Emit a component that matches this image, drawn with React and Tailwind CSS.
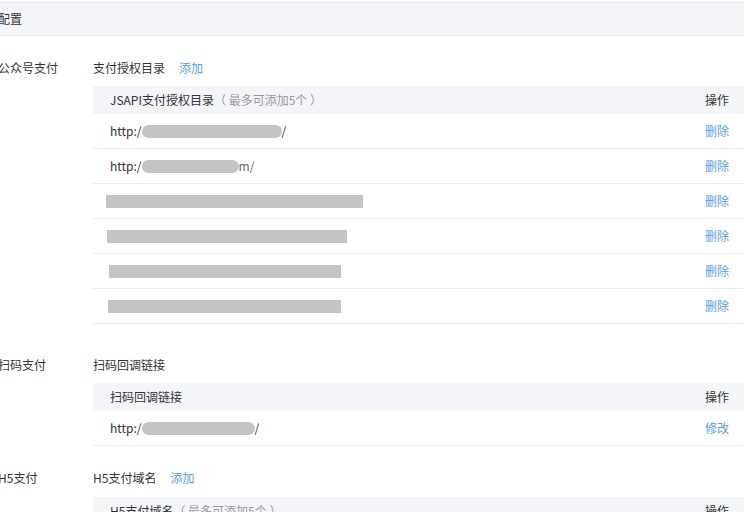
import React from 'react'

const font = { fontFamily: '"Noto Sans CJK SC", "Liberation Sans", sans-serif' }

function Blob({ w, className = '' }) {
  return <span className={`inline-block h-[13px] rounded-full bg-[#c4c4c4] ${className}`} style={{ width: w }}></span>
}

function Bar({ w, ml }) {
  return <span className="block h-[13px] bg-[#c4c4c4]" style={{ width: w, marginLeft: ml }}></span>
}

function TableHead({ children }) {
  return (
    <div className="flex h-[28px] items-center justify-between bg-[#f4f5f9] pl-[17px] pr-[15px] text-[#333]">
      <div>{children}</div>
      <div>操作</div>
    </div>
  )
}

function Row({ children, action = '删除' }) {
  return (
    <div className="flex h-[35px] items-center justify-between border-b border-[#ebecef] pr-[15px]">
      <div className="flex items-center">{children}</div>
      <a className="text-[#5b9de2]">{action}</a>
    </div>
  )
}

export default function App() {
  return (
    <div className="h-[512px] w-[744px] overflow-hidden bg-white text-[12px] text-[#333]" style={font}>
      <div className="mt-[2px] flex h-[34px] items-center border-y border-[#e8e9ed] bg-[#f4f5f9]">
        <span className="-ml-[2px]">配置</span>
      </div>

      <div className="mt-[23px] flex">
        <div className="-ml-[2px] w-[95px] leading-[18px]">公众号支付</div>
        <div className="flex-1">
          <div className="leading-[18px]">
            支付授权目录<a className="ml-[14px] text-[#5b9de2]">添加</a>
          </div>
          <div className="mt-[9px]">
            <TableHead>
              JSAPI支付授权目录<span className="text-[#9a9a9a]">（ 最多可添加5个 ）</span>
            </TableHead>
            <Row>
              <span className="pl-[17px]">http:/</span>
              <Blob w={140} />
              <span>/</span>
            </Row>
            <Row>
              <span className="pl-[17px]">http:/</span>
              <Blob w={97} />
              <span className="text-[#666]">m/</span>
            </Row>
            <Row><Bar w={257} ml={13} /></Row>
            <Row><Bar w={240} ml={14} /></Row>
            <Row><Bar w={232} ml={16} /></Row>
            <Row><Bar w={233} ml={15} /></Row>
          </div>
        </div>
      </div>

      <div className="mt-[32px] flex">
        <div className="-ml-[2px] w-[95px] leading-[18px]">扫码支付</div>
        <div className="flex-1">
          <div className="leading-[18px]">扫码回调链接</div>
          <div className="mt-[9px]">
            <TableHead>扫码回调链接</TableHead>
            <Row action="修改">
              <span className="pl-[17px]">http:/</span>
              <Blob w={113} />
              <span>/</span>
            </Row>
          </div>
        </div>
      </div>

      <div className="mt-[23px] flex">
        <div className="-ml-[2px] w-[95px] leading-[18px]">H5支付</div>
        <div className="flex-1">
          <div className="leading-[18px]">
            H5支付域名<a className="ml-[14px] text-[#5b9de2]">添加</a>
          </div>
          <div className="mt-[10px]">
            <TableHead>
              H5支付域名<span className="text-[#9a9a9a]">（ 最多可添加5个 ）</span>
            </TableHead>
          </div>
        </div>
      </div>
    </div>
  )
}
